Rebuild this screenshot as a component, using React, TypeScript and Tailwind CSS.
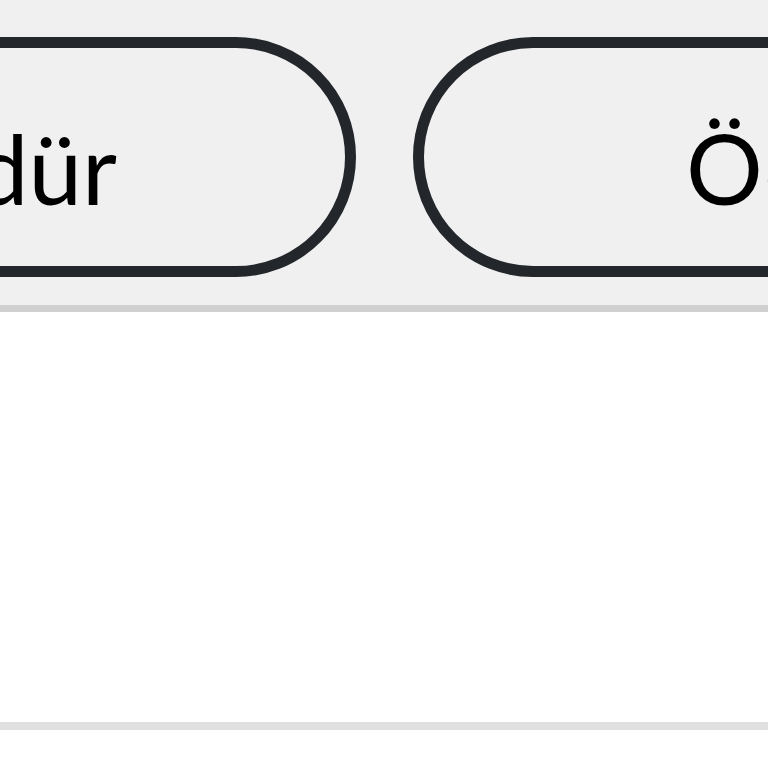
export default function App() {
  return (
    <div className="flex h-[768px] w-[768px] flex-col overflow-hidden bg-white font-['Lato',sans-serif] text-black">
      {/* Action bar */}
      <div className="flex h-[312px] shrink-0 items-start overflow-hidden border-b-[7px] border-[#d0d0d0] bg-[#f0f0f0] pt-[37px]">
        <button className="ml-[-244px] flex h-[240px] w-[600px] shrink-0 items-center justify-end rounded-full border-[11px] border-[#23262b] pr-[228px] pt-[22px] text-[96px] leading-none">
          Döndür
        </button>
        <button className="ml-[57px] flex h-[240px] w-[600px] shrink-0 items-center justify-start rounded-full border-[11px] border-[#23262b] pl-[262px] pt-[22px] text-[96px] leading-none">
          <span>Ö</span>
          <span className="ml-[1px]">deme</span>
        </button>
      </div>

      {/* Content */}
      <div className="h-[418px] shrink-0 border-b-[8px] border-[#e0e0e0] bg-white" />
      <div className="flex-1 bg-white" />
    </div>
  );
}
